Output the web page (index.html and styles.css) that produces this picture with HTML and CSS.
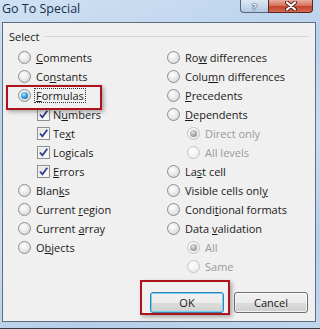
FILE: index.html
```html
<!DOCTYPE html>
<html lang="en">
<head>
    <meta charset="UTF-8">
    <title>Go To Special</title>
    <link rel="stylesheet" href="styles.css">
</head>
<body>
    <div class="window">
        <div class="titlebar">
            <span class="title">Go To Special</span>
            <div class="caption-buttons">
                <span class="cap-btn help">?</span>
                <span class="cap-btn close">
                    <svg width="12" height="10" viewBox="0 0 12 10">
                        <path d="M2 1.5 L10 8.5 M10 1.5 L2 8.5" stroke="#4a1d16" stroke-width="4" stroke-linecap="round"/>
                        <path d="M2 1.5 L10 8.5 M10 1.5 L2 8.5" stroke="#fff" stroke-width="2.2" stroke-linecap="round"/>
                    </svg>
                </span>
            </div>
        </div>

        <div class="client">
            <div class="group">
                <div class="legend">
                    <span>Select</span>
                    <span class="rule"></span>
                </div>

                <div class="columns">
                    <div class="col col-left">
                        <div class="opt"><span class="radio"></span><span><u>C</u>omments</span></div>
                        <div class="opt"><span class="radio"></span><span>Co<u>n</u>stants</span></div>
                        <div class="opt"><span class="radio checked"></span><span class="focus"><u>F</u>ormulas</span></div>
                        <div class="opt sub"><span class="check"><svg width="11" height="11" viewBox="0 0 11 11"><path d="M2 5.5 L4.4 8.3 L9.3 1.8" fill="none" stroke="#2b3f8c" stroke-width="1.8"/></svg></span><span>N<u>u</u>mbers</span></div>
                        <div class="opt sub"><span class="check"><svg width="11" height="11" viewBox="0 0 11 11"><path d="M2 5.5 L4.4 8.3 L9.3 1.8" fill="none" stroke="#2b3f8c" stroke-width="1.8"/></svg></span><span>Te<u>x</u>t</span></div>
                        <div class="opt sub"><span class="check"><svg width="11" height="11" viewBox="0 0 11 11"><path d="M2 5.5 L4.4 8.3 L9.3 1.8" fill="none" stroke="#2b3f8c" stroke-width="1.8"/></svg></span><span>Lo<u>g</u>icals</span></div>
                        <div class="opt sub"><span class="check"><svg width="11" height="11" viewBox="0 0 11 11"><path d="M2 5.5 L4.4 8.3 L9.3 1.8" fill="none" stroke="#2b3f8c" stroke-width="1.8"/></svg></span><span><u>E</u>rrors</span></div>
                        <div class="opt"><span class="radio"></span><span>Blan<u>k</u>s</span></div>
                        <div class="opt"><span class="radio"></span><span>Current <u>r</u>egion</span></div>
                        <div class="opt"><span class="radio"></span><span>Current <u>a</u>rray</span></div>
                        <div class="opt"><span class="radio"></span><span>O<u>b</u>jects</span></div>
                    </div>

                    <div class="col col-right">
                        <div class="opt"><span class="radio"></span><span>Ro<u>w</u> differences</span></div>
                        <div class="opt"><span class="radio"></span><span>Colu<u>m</u>n differences</span></div>
                        <div class="opt"><span class="radio"></span><span><u>P</u>recedents</span></div>
                        <div class="opt"><span class="radio"></span><span><u>D</u>ependents</span></div>
                        <div class="opt sub disabled"><span class="radio checked"></span><span>Direct only</span></div>
                        <div class="opt sub disabled"><span class="radio"></span><span>All levels</span></div>
                        <div class="opt"><span class="radio"></span><span>La<u>s</u>t cell</span></div>
                        <div class="opt"><span class="radio"></span><span>Visible cells onl<u>y</u></span></div>
                        <div class="opt"><span class="radio"></span><span>Condi<u>t</u>ional formats</span></div>
                        <div class="opt"><span class="radio"></span><span>Data <u>v</u>alidation</span></div>
                        <div class="opt sub disabled"><span class="radio checked"></span><span>All</span></div>
                        <div class="opt sub disabled"><span class="radio"></span><span>Same</span></div>
                    </div>
                </div>
            </div>

            <div class="buttons">
                <button class="btn default">OK</button>
                <button class="btn">Cancel</button>
            </div>

            <!-- red highlight boxes drawn over the dialog -->
            <div class="mark mark-formulas"></div>
            <div class="mark mark-ok"></div>
        </div>
    </div>
</body>
</html>
```

FILE: styles.css
```css
body {
    margin: 0;
    padding: 0;
}

.window {
    width: 320px;
    height: 329px;
    box-sizing: border-box;
    display: flex;
    flex-direction: column;
    background: linear-gradient(160deg, #cfe1f4 0%, #b9d1ea 35%, #cadef2 55%, #b6cee8 80%, #c1d7ee 100%);
    border-bottom: 1px solid #2f3d4b;
    font-family: "Open Sans", sans-serif;
    font-size: 11px;
    color: #1a1a1a;
}

.titlebar {
    height: 22px;
    flex: none;
    display: flex;
    justify-content: space-between;
    align-items: flex-start;
}

.title {
    font-size: 12.5px;
    line-height: 17px;
    padding-left: 2px;
    color: #1b2f4d;
}

.caption-buttons {
    display: flex;
    margin-right: 7px;
}

.cap-btn {
    height: 13px;
    box-sizing: border-box;
    display: flex;
    align-items: center;
    justify-content: center;
    border: 1px solid #56657a;
    border-top: none;
}

.help {
    width: 28px;
    border-right: none;
    border-radius: 0 0 0 4px;
    background: linear-gradient(#dde8f4 0%, #c9d9ec 50%, #b3c8e0 100%);
    color: #fff;
    font-weight: bold;
    font-size: 9.5px;
    line-height: 13px;
    text-shadow: 0 0 1px #3a4a60, 0 0 1px #3a4a60, 0 0 2px #3a4a60;
}

.close {
    width: 45px;
    border-color: #5a2a22;
    border-radius: 0 0 4px 0;
    background: linear-gradient(#e9ad9f 0%, #d7765f 45%, #c4422e 55%, #d56a4f 100%);
}

.client {
    margin-left: 2px;
    width: 314px;
    height: 300px;
    flex: none;
    box-sizing: border-box;
    border: 1px solid #5f6e7e;
    background-color: #f0f0f0;
    position: relative;
    display: flex;
    flex-direction: column;
}

.group {
    padding: 6px 6px 0 6px;
}

.legend {
    display: flex;
    align-items: center;
    height: 16px;
    line-height: 16px;
}

.legend .rule {
    flex: 1;
    height: 1px;
    margin-left: 5px;
    margin-top: -1px;
    background-color: #d8d8d8;
}

.columns {
    display: flex;
    padding-left: 9px;
    margin-top: 3px;
}

.col-left {
    width: 149px;
}

.opt {
    display: flex;
    align-items: center;
    height: 19px;
    line-height: 19px;
    white-space: nowrap;
}

.col-left .sub {
    padding-left: 19px;
}

.col-right .sub {
    padding-left: 20px;
}

.opt.disabled {
    color: #9a9a9a;
}

.opt u {
    text-underline-offset: 1px;
}

.radio {
    width: 13px;
    height: 13px;
    flex: none;
    box-sizing: border-box;
    margin-right: 5px;
    border-radius: 50%;
    border: 1px solid #8c8e90;
    background: radial-gradient(circle at 40% 35%, #ffffff 0%, #e6e6e6 55%, #c9c9c9 100%);
    position: relative;
}

.radio.checked::after {
    content: "";
    position: absolute;
    left: 2px;
    top: 2px;
    width: 7px;
    height: 7px;
    border-radius: 50%;
    background: radial-gradient(circle at 40% 35%, #a8ecff 0%, #3c9de0 45%, #0c4f98 100%);
}

.disabled .radio {
    border-color: #c2c4c6;
    background: radial-gradient(circle at 40% 35%, #ffffff 0%, #f1f1f1 55%, #e2e2e2 100%);
}

.disabled .radio.checked::after {
    background: radial-gradient(circle at 40% 35%, #e4e4e4 0%, #aaaaaa 50%, #7e7e7e 100%);
}

.check {
    width: 13px;
    height: 13px;
    flex: none;
    box-sizing: border-box;
    margin-right: 3px;
    border: 1px solid #8e8f8f;
    background: linear-gradient(135deg, #dcdcdc 0%, #f6f6f6 60%, #ffffff 100%);
    box-shadow: inset 0 0 0 1px #f4f4f4;
    display: flex;
    align-items: center;
    justify-content: center;
}

.focus {
    line-height: 13px;
    height: 13px;
    padding: 0 1px;
    margin-left: -1px;
    outline: 1px dotted #333;
}

.buttons {
    margin-top: auto;
    display: flex;
    justify-content: flex-end;
    gap: 10px;
    padding: 0 7px 8px 0;
}

.btn {
    width: 74px;
    height: 21px;
    box-sizing: border-box;
    border: 1px solid #707070;
    border-radius: 3px;
    background: linear-gradient(#f2f2f2 0%, #ebebeb 50%, #dddddd 51%, #cfcfcf 100%);
    box-shadow: inset 0 0 0 1px rgba(255, 255, 255, 0.7);
    font-family: "Open Sans", sans-serif;
    font-size: 11px;
    line-height: 17px;
    color: #1a1a1a;
    padding: 0;
}

.btn.default {
    border-color: #3c7fb1;
    box-shadow: inset 0 0 0 1px #6fd3f7;
}

.mark {
    position: absolute;
    box-sizing: border-box;
    border: 2px solid #b0121b;
    box-shadow: 2px 2px 4px rgba(0, 0, 0, 0.3);
    pointer-events: none;
}

.mark-formulas {
    left: 3px;
    top: 62px;
    width: 96px;
    height: 25px;
}

.mark-ok {
    left: 137px;
    top: 257px;
    width: 90px;
    height: 35px;
}
```
